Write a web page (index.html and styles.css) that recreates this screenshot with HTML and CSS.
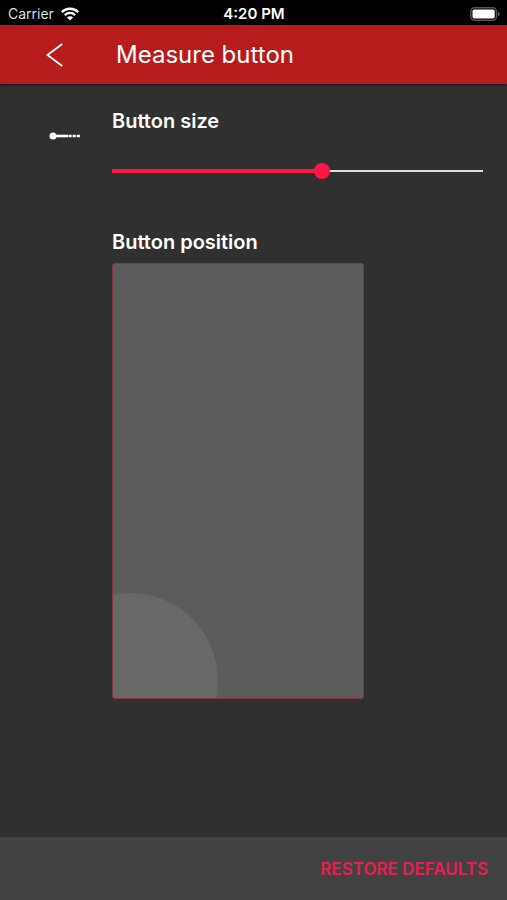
FILE: index.html
```html
<!DOCTYPE html>
<html lang="en">
<head>
    <meta charset="UTF-8">
    <meta name="viewport" content="width=device-width, initial-scale=1.0">
    <title>Measure button</title>
    <link rel="stylesheet" href="styles.css">
</head>
<body>
    <div class="status-bar">
        <div class="carrier">
            <span>Carrier</span>
            <svg width="18" height="14" viewBox="0 0 18 14" aria-hidden="true">
                <g fill="none" stroke="#fff" stroke-width="2.3">
                    <path d="M0.8 5.1a11.7 11.7 0 0 1 16.4 0"/>
                    <path d="M3.8 8.1a7.4 7.4 0 0 1 10.4 0"/>
                </g>
                <path d="M9 13.6L5.9 10.5a4.4 4.4 0 0 1 6.2 0z" fill="#fff"/>
            </svg>
        </div>
        <span class="time">4:20 PM</span>
        <div class="battery">
            <svg width="30" height="14" viewBox="0 0 30 14" aria-hidden="true">
                <rect x="0.8" y="0.8" width="25.6" height="12.4" rx="3.6" fill="none" stroke="#555" stroke-width="1.4"/>
                <rect x="2.5" y="2.5" width="22.2" height="9" rx="1.8" fill="#fff"/>
                <path d="M27.8 4.8c2.4 1 2.4 3.4 0 4.4z" fill="#666"/>
            </svg>
        </div>
    </div>

    <header class="app-bar">
        <button type="button" class="back" aria-label="Back">
            <svg width="18" height="24" viewBox="0 0 18 24" aria-hidden="true">
                <path d="M16.2 1L1.5 12L16.2 23" fill="none" stroke="#fff" stroke-width="1.8"/>
            </svg>
        </button>
        <h1>Measure button</h1>
    </header>

    <main class="settings">
        <div class="row">
            <svg class="row-icon" width="32" height="8" viewBox="0 0 32 8" aria-hidden="true">
                <circle cx="4" cy="4" r="3.5" fill="#fff"/>
                <path d="M6 4H19" stroke="#fff" stroke-width="2.6"/>
                <path d="M19.5 4H31.5" stroke="#fff" stroke-width="2.6" stroke-dasharray="3.2 0.9"/>
            </svg>
            <div class="field">
                <label for="size">Button size</label>
                <input type="range" id="size" min="0" max="100" value="57" style="--value: 57%">
            </div>
        </div>
        <div class="row">
            <div class="field">
                <h2>Button position</h2>
                <div class="preview">
                    <div class="preview-button"></div>
                </div>
            </div>
        </div>
    </main>

    <footer class="actions">
        <button type="button" class="restore">RESTORE DEFAULTS</button>
    </footer>

    <script>
        const size = document.getElementById('size');
        size.addEventListener('input', function() {
            size.style.setProperty('--value', size.value + '%');
        });
    </script>
</body>
</html>
```

FILE: styles.css
```css
* {
    box-sizing: border-box;
}
body {
    margin: 0;
    min-height: 100vh;
    display: flex;
    flex-direction: column;
    background-color: #303030;
    color: #fff;
    font-family: Inter, "Liberation Sans", sans-serif;
}
button {
    border: none;
    background: none;
    padding: 0;
    font-family: inherit;
    cursor: pointer;
}
svg {
    display: block;
}
.status-bar {
    display: grid;
    grid-template-columns: 1fr auto 1fr;
    align-items: center;
    height: 25px;
    padding: 2px 7px 0 8px;
    background-color: #000;
    font-size: 14px;
    line-height: 20px;
}
.carrier {
    display: flex;
    align-items: center;
    gap: 7px;
    color: #ddd;
}
.time {
    font-size: 15px;
    font-weight: 600;
}
.battery {
    justify-self: end;
}
.app-bar {
    display: flex;
    align-items: center;
    height: 59px;
    background-color: #b71c1c;
    box-shadow: 0 1px 3px rgba(0, 0, 0, 0.6);
}
.back {
    display: flex;
    justify-content: center;
    width: 110px;
}
h1 {
    margin: 0 0 0 6px;
    font-size: 24px;
    font-weight: 400;
    line-height: 32px;
}
.settings {
    flex: 1;
    padding: 24px 24px 24px 0;
}
.row {
    display: grid;
    grid-template-columns: 112px 1fr;
    margin-bottom: 50px;
}
.row-icon {
    margin: 24px 0 0 49px;
}
.field {
    grid-column: 2;
}
label,
h2 {
    display: block;
    margin: 0;
    font-size: 20px;
    font-weight: 600;
    line-height: 26px;
}
input[type="range"] {
    appearance: none;
    -webkit-appearance: none;
    display: block;
    width: 100%;
    height: 16px;
    margin: 29px 0 0;
    background:
        linear-gradient(#ff1744, #ff1744) left center / var(--value) 4px no-repeat,
        linear-gradient(#ddd, #ddd) left center / 100% 2px no-repeat;
    cursor: pointer;
}
input[type="range"]::-webkit-slider-thumb {
    -webkit-appearance: none;
    width: 16px;
    height: 16px;
    border-radius: 50%;
    background-color: #ff1744;
}
.preview {
    position: relative;
    width: 68%;
    aspect-ratio: 252 / 436;
    margin-top: 8px;
    overflow: hidden;
    border: 1px solid #82383f;
    border-radius: 3px;
    background-color: #5c5c5c;
}
.preview-button {
    position: absolute;
    left: -28%;
    bottom: -16%;
    width: 70%;
    aspect-ratio: 1;
    border-radius: 50%;
    background-color: #686868;
}
.actions {
    display: flex;
    justify-content: flex-end;
    align-items: center;
    height: 63px;
    padding: 0 19px;
    background-color: #424242;
}
.restore {
    color: #e91e50;
    font-size: 17px;
    font-weight: 600;
    line-height: 24px;
}
```
